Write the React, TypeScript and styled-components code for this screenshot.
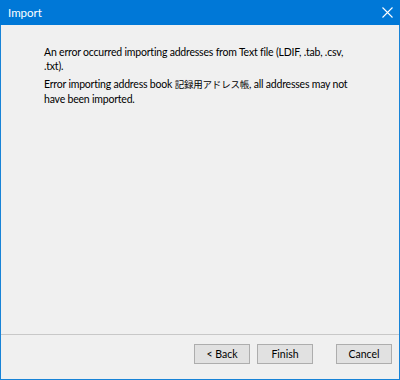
import styled, { createGlobalStyle } from 'styled-components'

const Global = createGlobalStyle`
    html, body {
        margin: 0;
        padding: 0;
        background: #f0f0f0;
    }
    body {
        font-family: Lato, "Noto Sans CJK JP", sans-serif;
    }
`

const Window = styled.div`
    width: 400px;
    height: 380px;
    box-sizing: border-box;
    display: flex;
    flex-direction: column;
    background: #f0f0f0;
    border: 1px solid #1883d7;
    border-top: none;
`

const TitleBar = styled.div`
    height: 25px;
    flex-shrink: 0;
    margin: 0 -1px;
    display: flex;
    align-items: center;
    justify-content: space-between;
    background: #0078d7;
    color: #ffffff;
    padding: 0 6px 0 8px;
    font-size: 11.5px;
`

const Close = styled.div`
    width: 14px;
    height: 14px;
    display: flex;
    align-items: center;
    justify-content: center;
`

const Content = styled.div`
    flex: 1;
    padding: 20px 44px 0 43px;
    font-size: 10.5px;
    letter-spacing: -0.2px;
    line-height: 14px;
    color: #000000;
`

const Para = styled.p`
    margin: 0 0 4px 0;
`

const Jp = styled.span`
    font-size: 9.5px;
    letter-spacing: -0.2px;
`

const Footer = styled.div`
    height: 35px;
    flex-shrink: 0;
    border-top: 1px solid #c8c8c8;
    display: flex;
    align-items: flex-start;
    padding: 9px 7px 0 0;
    justify-content: flex-end;
`

const Button = styled.button<{ $gap?: number }>`
    width: 56px;
    height: 20px;
    margin-left: ${p => p.$gap ?? 7}px;
    padding: 0;
    background: #e1e1e1;
    border: 1px solid #adadad;
    font-family: Lato, sans-serif;
    font-size: 10.5px;
    color: #000000;
`

export default function App() {
    return (
        <>
            <Global />
            <Window>
                <TitleBar>
                    <span>Import</span>
                    <Close>
                        <svg width="11" height="11" viewBox="0 0 11 11">
                            <path d="M0.5 0.5 L10.5 10.5 M10.5 0.5 L0.5 10.5" stroke="#ffffff" strokeWidth="1.1" />
                        </svg>
                    </Close>
                </TitleBar>
                <Content>
                    <Para>An error occurred importing addresses from Text file (LDIF, .tab, .csv, .txt).</Para>
                    <Para>Error importing address book <Jp>記録用アドレス帳</Jp>, all addresses may not have been imported.</Para>
                </Content>
                <Footer>
                    <Button>&lt; Back</Button>
                    <Button>Finish</Button>
                    <Button $gap={23}>Cancel</Button>
                </Footer>
            </Window>
        </>
    )
}
